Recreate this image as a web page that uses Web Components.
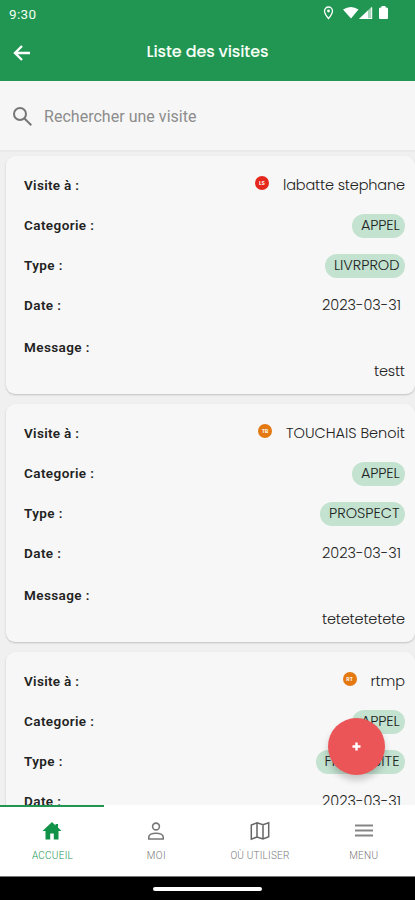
<!DOCTYPE html>
<html lang="fr">
<head>
<meta charset="utf-8">
<title>Liste des visites</title>
<style>
html,body{margin:0;height:100%;overflow:hidden}
body{font-family:Roboto,"Liberation Sans",sans-serif;--geo:Poppins,Inter,"Liberation Sans",sans-serif}
</style>
</head>
<body>
<visits-app></visits-app>
<script>
const define=(name,html,after)=>{
  const t=document.createElement('template');t.innerHTML=html;
  customElements.define(name,class extends HTMLElement{
    constructor(){super();this.attachShadow({mode:'open'}).append(t.content.cloneNode(true));}
    connectedCallback(){after&&after(this,this.shadowRoot);}
  });
};

// Text set to a fixed width by evening out its letter spacing.
define('fit-text',`<style>:host{display:inline-block;white-space:nowrap}span{display:inline-block}</style><span></span>`,(h,r)=>{
  const s=r.querySelector('span');s.textContent=h.getAttribute('text');
  const w=+h.getAttribute('w'),n=s.textContent.length,nat=s.getBoundingClientRect().width;
  h.style.width=w+'px';
  s.style.letterSpacing=((w-nat)/(n-1||1))+'px';
});

define('status-bar',`<style>
:host{display:flex;height:27px;align-items:center;padding:0 27px 0 9px;box-sizing:border-box;color:#f3fff3;font-size:13.500px;font-weight:400}
.s{flex:1}svg{display:block;fill:#fff;margin-top:-2px}
</style><fit-text text="9:30" w="27"></fit-text><span class="s"></span>
<svg width="66" height="16" viewBox="0 0 66 16">
<path d="M6.500 2a4 4 0 0 0-4 4c0 2.700 4 7.500 4 7.500S10.500 8.700 10.500 6a4 4 0 0 0-4-4z" fill="none" stroke="#fff" stroke-width="1.300"/><circle cx="6.500" cy="6" r="1.400"/>
<path d="M21 4.500q8-5 15.500 0L29 13.500z"/>
<path d="M37 14L50 1.500V14z" fill-opacity=".6"/><path d="M37 14L46 5.400V14z"/><path d="M49.200 2.500h1V14h-4v-1h3z"/>
<path d="M57 3.500l1-1h1.500V1h4v1.500H65l1 1V13a1 1 0 0 1-1 1h-7a1 1 0 0 1-1-1z"/>
</svg>`);

define('app-header',`<style>
:host{display:block;height:81px;background:#219653;color:#f7fff7}
.bar{display:grid;grid-template-columns:48px 1fr 48px;height:50px;align-items:center;box-sizing:border-box}
fit-text{justify-self:center;font:500 16px/24px var(--geo)}
svg{display:block;margin:2px 0 0 13px}
</style><status-bar></status-bar><div class="bar">
<svg width="18" height="18" viewBox="0 0 18 18" fill="none" stroke="#fff" stroke-width="2.400"><path d="M17 9H2.500M9 2L2 9l7 7"/></svg>
<fit-text text="Liste des visites" w="122"></fit-text></div>`);

define('search-field',`<style>
:host{display:flex;height:71px;align-items:center;background:#f6f6f6;border-bottom:2px solid #e9e9e9;padding:1px 0 0 12px;box-sizing:border-box;gap:11px;color:#8c8c8c;font-size:16px}
svg{display:block}
</style><svg width="21" height="21" viewBox="0 0 21 21" fill="none" stroke="#777" stroke-width="2"><circle cx="8" cy="8" r="6"/><path d="M12.200 12.200L19.300 19.300"/></svg>
<fit-text text="Rechercher une visite" w="152.5"></fit-text>`);

define('tag-pill',`<style>
:host{display:block;height:24px;box-sizing:border-box;padding:0 5.500px 0 9px;border-radius:12px;background:#c3e2d0;font:300 14.500px/22px var(--geo);color:#222}
</style><slot></slot>`);

define('user-dot',`<style>
:host{display:flex;width:14px;height:14px;border-radius:50%;align-items:center;justify-content:center;background:var(--dot);color:#fff;font:600 5.500px/14px var(--geo);margin:0 14px 4px 0}
</style><slot></slot>`);

define('visit-card',`<style>
:host{display:block;box-sizing:border-box;height:238px;flex:none;padding:9px 10px 0 18px;border-radius:9px;background:#f7f7f7;box-shadow:0 1px 2px #0003}
.row{display:flex;height:40px;align-items:center;justify-content:space-between}
.l{font-size:13.500px;font-weight:600;color:#222}
.v{display:flex;align-items:center;font:300 14.500px/22px var(--geo);color:#222;font-feature-settings:"cv11"}
.date{padding-right:4px}.msg{height:44px}.end{display:flex;justify-content:flex-end;margin-top:-9px}
tag-pill{margin-top:2px}
</style><div id="b"></div>`,(h,r)=>{
  const a=k=>h.getAttribute(k);
  const f=k=>{const [t,w]=a(k).split('|');return `<fit-text text="${t}" w="${w}"></fit-text>`;};
  const l=(t,w)=>`<fit-text class="l" text="${t}" w="${w}"></fit-text>`;
  r.getElementById('b').innerHTML=`
  <div class="row">${l('Visite à :',55)}<div class="v"><user-dot style="--dot:${a('color')}">${a('ini')}</user-dot>${f('name')}</div></div>
  <div class="row">${l('Categorie :',70)}<div class="v"><tag-pill>${f('cat')}</tag-pill></div></div>
  <div class="row">${l('Type :',38.5)}<div class="v"><tag-pill>${f('type')}</tag-pill></div></div>
  <div class="row">${l('Date :',37)}<div class="v date">${f('date')}</div></div>
  <div class="row msg">${l('Message :',65.5)}</div>
  ${a('msg')?`<div class="v end">${f('msg')}</div>`:''}`;
});

define('visit-list',`<style>
:host{display:flex;flex-direction:column;gap:10px;box-sizing:border-box;padding:4px 0 0 6px;background:#f0f0f0;overflow:hidden}
</style><slot></slot>`);

define('add-button',`<style>
:host{position:absolute;left:328px;top:718px;width:57px;height:57px;border-radius:50%;background:#eb5558;box-shadow:0 5px 7px #0003;display:flex;align-items:center;justify-content:center}
</style><svg width="9" height="9" viewBox="0 0 9 9" stroke="#fff" stroke-width="2.400"><path d="M4.500 .5v8M.5 4.500h8"/></svg>`);

define('nav-tab',`<style>
:host{display:flex;flex-direction:column;align-items:center;box-sizing:border-box;border-top:2px solid transparent;color:#777;font-size:10px;font-weight:300;line-height:14px;padding:13px 0 0 1px;gap:7px}
:host([active]){border-color:#219653;color:#219653}
::slotted(svg){display:block;width:22px;height:22px}
</style><slot name="icon"></slot><slot></slot>`);

define('bottom-nav',`<style>
:host{display:grid;grid-template-columns:repeat(4,1fr);height:71px;background:#fff}
</style>
<nav-tab active><svg slot="icon" viewBox="0 0 22 22"><path fill="#119347" d="M11 2L1.500 11H4.500v8.500h4.700v-6h3.600v6h4.700V11h3L17 7.600V4h-2.500v1.400z"/></svg><fit-text text="ACCUEIL" w="41"></fit-text></nav-tab>
<nav-tab><svg slot="icon" viewBox="0 0 22 22" fill="none" stroke="#777" stroke-width="1.600"><circle cx="11" cy="6.500" r="3.400"/><path d="M3.800 19V17c0-2.300 3.200-3.800 7.200-3.800s7.200 1.500 7.200 3.800v2z"/></svg><fit-text text="MOI" w="19"></fit-text></nav-tab>
<nav-tab><svg slot="icon" viewBox="0 0 22 22" fill="none" stroke="#666" stroke-width="1.500"><path d="M2.300 5L8 2.800l6 2 5.700-2v14L14 19l-6-2-5.700 2.200zM8 2.800V17M14 4.800V19"/></svg><fit-text text="OÙ UTILISER" w="59"></fit-text></nav-tab>
<nav-tab><svg slot="icon" viewBox="0 0 22 22" stroke="#858585" stroke-width="1.900"><path d="M2 5.500h18M2 10.500h18M2 15.500h18"/></svg><fit-text text="MENU" w="29"></fit-text></nav-tab>`);

define('gesture-bar',`<style>
:host{display:flex;height:24px;background:#000;border-top:1px solid #777;box-sizing:border-box;justify-content:center}
i{width:109px;height:4px;border-radius:2px;background:#fff;margin-top:10px}
</style><i></i>`);

define('visits-app',`<style>
:host{display:flex;flex-direction:column;position:relative;width:415px;height:900px;overflow:hidden;background:#f0f0f0}
app-header,search-field,bottom-nav,gesture-bar{flex:none}
visit-list{flex:1;min-height:0}
</style>
<app-header></app-header><search-field></search-field>
<visit-list>
<visit-card color="#e5281d" ini="LS" name="labatte stephane|122" cat="APPEL|38.5" type="LIVRPROD|65.5" date="2023-03-31|79" msg="testt|31"></visit-card>
<visit-card color="#e47911" ini="TB" name="TOUCHAIS Benoit|119" cat="APPEL|38.5" type="PROSPECT|70.5" date="2023-03-31|79" msg="tetetetetete|83"></visit-card>
<visit-card color="#e47911" ini="RT" name="rtmp|34.5" cat="APPEL|38.5" type="FIRSTVISITE|75" date="2023-03-31|79"></visit-card>
</visit-list>
<bottom-nav></bottom-nav><gesture-bar></gesture-bar><add-button></add-button>`);
</script>
</body>
</html>
